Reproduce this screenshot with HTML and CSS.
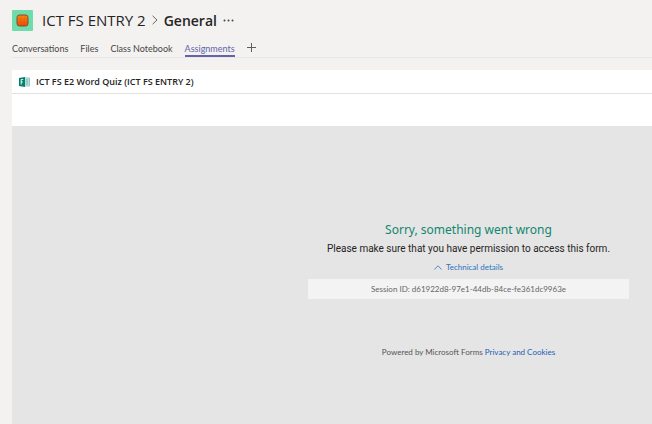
FILE: index.html
```html
<!DOCTYPE html>
<html lang="en">
<head>
<meta charset="utf-8">
<title>General - Assignments</title>
<link rel="stylesheet" href="styles.css">
</head>
<body>
<header class="channel">
  <div class="title-row">
    <svg class="avatar" viewBox="0 0 21 21" aria-hidden="true">
      <defs><linearGradient id="tile" x1="0" y1="0" x2="0" y2="1"><stop offset="0" stop-color="#f98a08"/><stop offset="1" stop-color="#ee4c0a"/></linearGradient></defs>
      <rect width="21" height="21" rx="1" fill="#6fdcac"/>
      <rect x="5" y="5" width="11" height="11" rx="2.4" fill="url(#tile)" stroke="#72513a"/>
      <path d="M8.7 5.5v10M12.3 5.5v10M5.5 8.7h10M5.5 12.3h10" stroke="#d93d0b" stroke-width=".5" opacity=".4"/>
    </svg>
    <h1 class="breadcrumb">
      <span class="team">ICT FS ENTRY 2</span>
      <svg class="chevron" viewBox="0 0 6 10" aria-hidden="true"><path d="M.6.8 5 5 .6 9.2"/></svg>
      <span class="name">General</span>
    </h1>
    <button class="more" type="button" aria-label="More options">
      <svg viewBox="0 0 11 3" aria-hidden="true"><circle cx="1.5" cy="1.5" r="1"/><circle cx="5.5" cy="1.5" r="1"/><circle cx="9.5" cy="1.5" r="1"/></svg>
    </button>
  </div>
  <nav class="tabs">
    <a class="tab" href="#">Conversations</a>
    <a class="tab" href="#">Files</a>
    <a class="tab" href="#">Class Notebook</a>
    <a class="tab active" href="#">Assignments</a>
    <button class="add" type="button" aria-label="Add a tab">
      <svg viewBox="0 0 9 9" aria-hidden="true"><path d="M4.5 0v9M0 4.5h9"/></svg>
    </button>
  </nav>
</header>
<main class="panel">
  <div class="form-title">
    <svg class="forms-icon" viewBox="0 0 11 10" aria-hidden="true">
      <path d="M5 1h5.5v8H5z" fill="#d9efea" stroke="#70b9ac" stroke-width=".7"/>
      <path d="M6.5 3h3M6.5 5h3M6.5 7h3" stroke="#4c9b8e" stroke-width=".9"/>
      <path d="M0 1 6 0v10L0 9z" fill="#04806f"/>
      <path d="M2.2 7.5v-5h2M2.2 5h1.7" fill="none" stroke="#fff" stroke-width=".9"/>
    </svg>
    <h2>ICT FS E2 Word Quiz (ICT FS ENTRY 2)</h2>
  </div>
  <div class="toolbar"></div>
  <section class="stage">
    <h3>Sorry, something went wrong</h3>
    <p class="message">Please make sure that you have permission to access this form.</p>
    <button class="details" type="button" aria-expanded="true">
      <svg viewBox="0 0 8 5" aria-hidden="true"><path d="M.4 4.5 4 .8l3.6 3.7"/></svg>
      Technical details
    </button>
    <p class="session">Session ID: d61922d8-97e1-44db-84ce-fe361dc9963e</p>
    <footer>Powered by Microsoft Forms <a href="#">Privacy and Cookies</a></footer>
  </section>
</main>
</body>
</html>
```
FILE: styles.css
```css
* { box-sizing: border-box; }
body {
  margin: 0;
  min-height: 100vh;
  display: flex;
  flex-direction: column;
  padding-left: 12px;
  background: #f3f2f1;
  color: #252423;
  font-family: Lato, "Noto Sans", sans-serif;
  font-size: 9px;
}
h1, h2, h3, p { margin: 0; font-weight: 400; }
button { border: 0; padding: 0; background: none; font: inherit; color: inherit; }
a { text-decoration: none; color: inherit; }
svg { display: block; flex: none; }

.title-row {
  display: flex;
  align-items: center;
  height: 40px;
}
.avatar { width: 21px; height: 21px; }
.breadcrumb {
  display: flex;
  align-items: center;
  gap: 6px;
  margin-left: 9px;
  font-family: "Open Sans", "Noto Sans", sans-serif;
  font-size: 15px;
}
.chevron { width: 6px; height: 10px; fill: none; stroke: #6b6967; stroke-width: 1; }
.name { font-weight: 600; font-size: 14px; }
.more { margin-left: 6px; }
.more svg { width: 11px; height: 3px; fill: #484644; }

.tabs {
  display: flex;
  align-items: flex-start;
  gap: 12px;
  height: 18px;
  border-bottom: 1px solid #e9e7e5;
  color: #484644;
}
.tab { height: 17px; line-height: 17px; white-space: nowrap; }
.active { color: #6264a7; border-bottom: 2px solid #6264a7; }
.add svg { width: 9px; height: 9px; margin-top: 3px; stroke: #605e5c; fill: none; }

.panel {
  flex: 1;
  display: flex;
  flex-direction: column;
  margin-top: 12px;
  background: #fff;
}
.form-title {
  display: flex;
  align-items: center;
  gap: 6px;
  height: 24px;
  padding-left: 7px;
  border-bottom: 1px solid #e1e1e1;
}
.forms-icon { width: 11px; height: 10px; }
.form-title h2 { font-family: "Open Sans", "Noto Sans", sans-serif; font-size: 9px; font-weight: 600; }
.toolbar { height: 32px; }
.stage {
  flex: 1;
  display: flex;
  flex-direction: column;
  align-items: center;
  padding: 95px 23px 0 296px;
  background: #e5e5e5;
}
.stage h3 { font-family: "Noto Sans", sans-serif; font-size: 12px; line-height: 18px; color: #12866f; }
.message { margin-top: 2px; font-family: Roboto, sans-serif; font-size: 10px; line-height: 16px; white-space: nowrap; }
.details {
  display: flex;
  align-items: center;
  gap: 4px;
  margin-top: 4px;
  font-size: 8px;
  line-height: 12px;
  color: #2b73c0;
}
.details svg { width: 8px; height: 5px; fill: none; stroke: #2b73c0; stroke-width: .8; }
.session {
  align-self: stretch;
  margin-top: 6px;
  background: #f3f3f3;
  color: #666;
  font-size: 8px;
  line-height: 20px;
  text-align: center;
}
.stage footer { margin-top: 47px; font-size: 8px; line-height: 12px; color: #555; }
.stage footer a { color: #1d5fb4; }
```
